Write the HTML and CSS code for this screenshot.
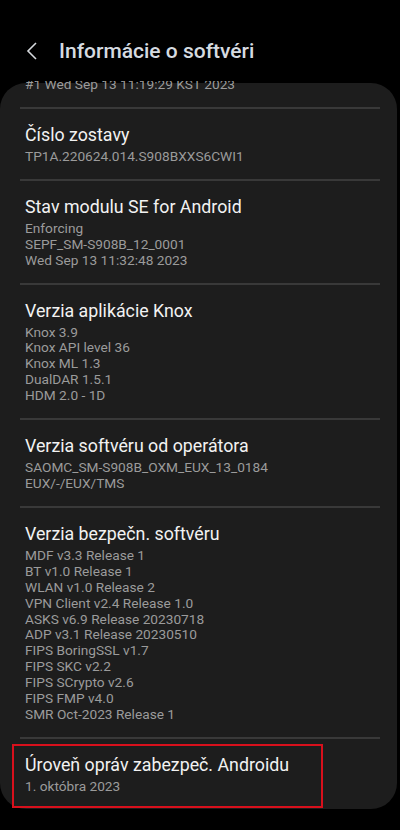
FILE: index.html
```html
<!DOCTYPE html>
<html lang="sk">
<head>
    <meta charset="UTF-8">
    <meta name="viewport" content="width=device-width, initial-scale=1.0">
    <title>Informácie o softvéri</title>
    <link rel="stylesheet" href="styles.css">
</head>
<body>
    <div class="header">
        <svg class="back" width="12" height="18" viewBox="0 0 12 18">
            <path d="M10 1 L2 9 L10 17" fill="none" stroke="#d6dade" stroke-width="1.6"/>
        </svg>
        <div class="title">Informácie o softvéri</div>
    </div>

    <div class="scroll">
        <div class="card">
            <div class="item first">
                <div class="sub">#1 Wed Sep 13 11:19:29 KST 2023</div>
            </div>
            <div class="divider"></div>

            <div class="item">
                <div class="name">Číslo zostavy</div>
                <div class="sub">TP1A.220624.014.S908BXXS6CWI1</div>
            </div>
            <div class="divider"></div>

            <div class="item">
                <div class="name">Stav modulu SE for Android</div>
                <div class="sub">Enforcing<br>SEPF_SM-S908B_12_0001<br>Wed Sep 13 11:32:48 2023</div>
            </div>
            <div class="divider"></div>

            <div class="item">
                <div class="name">Verzia aplikácie Knox</div>
                <div class="sub">Knox 3.9<br>Knox API level 36<br>Knox ML 1.3<br>DualDAR 1.5.1<br>HDM 2.0 - 1D</div>
            </div>
            <div class="divider"></div>

            <div class="item">
                <div class="name">Verzia softvéru od operátora</div>
                <div class="sub">SAOMC_SM-S908B_OXM_EUX_13_0184<br>EUX/-/EUX/TMS</div>
            </div>
            <div class="divider"></div>

            <div class="item">
                <div class="name">Verzia bezpečn. softvéru</div>
                <div class="sub">MDF v3.3 Release 1<br>BT v1.0 Release 1<br>WLAN v1.0 Release 2<br>VPN Client v2.4 Release 1.0<br>ASKS v6.9 Release 20230718<br>ADP v3.1 Release 20230510<br>FIPS BoringSSL v1.7<br>FIPS SKC v2.2<br>FIPS SCrypto v2.6<br>FIPS FMP v4.0<br>SMR Oct-2023 Release 1</div>
            </div>
            <div class="divider"></div>

            <div class="item last">
                <div class="name">Úroveň opráv zabezpeč. Androidu</div>
                <div class="sub">1. októbra 2023</div>
                <div class="highlight"></div>
            </div>
        </div>
    </div>
</body>
</html>
```

FILE: styles.css
```css
body {
    margin: 0;
    width: 400px;
    height: 830px;
    overflow: hidden;
    background-color: #000;
    font-family: Roboto, "Noto Sans", sans-serif;
}

.header {
    height: 81px;
    display: flex;
    align-items: flex-start;
    box-sizing: border-box;
    padding-top: 37px;
}

.back {
    margin: 5px 0 0 26px;
}

.title {
    margin-left: 21px;
    font-size: 21px;
    font-weight: 500;
    color: #d6dbe0;
    line-height: 28px;
}

.scroll {
    height: 749px;
    overflow: hidden;
}

.card {
    display: flow-root;
    margin-top: 2px;
    width: 397px;
    background-color: #1d1d1d;
    border-radius: 26px;
}

.item {
    position: relative;
    padding: 14px 25px 14px;
}

.item.first {
    padding: 0 25px 14px;
    margin-top: -6px;
}

.name {
    font-size: 17.8px;
    line-height: 24px;
    color: #f2f2f2;
    margin-bottom: 2px;
}

.sub {
    font-size: 13.7px;
    line-height: 15.9px;
    color: #9b9b9b;
}

.divider {
    height: 2px;
    margin: 0 17px 0 20px;
    background-color: #393939;
}

.highlight {
    position: absolute;
    top: 5px;
    left: 12px;
    width: 311px;
    bottom: 1px;
    box-sizing: border-box;
    border: 2px solid #d8101c;
}
```
